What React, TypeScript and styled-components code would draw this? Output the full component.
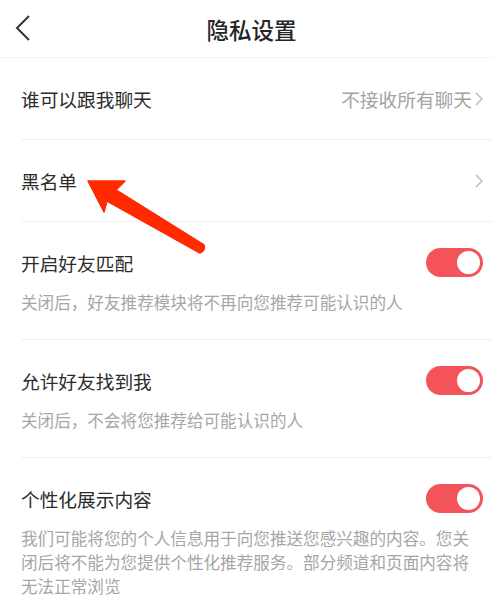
import styled, { createGlobalStyle } from "styled-components"

const GlobalStyle = createGlobalStyle`
  html, body {
    margin: 0;
    padding: 0;
    background: #ffffff;
  }
  body {
    font-family: "Noto Sans CJK SC", "Noto Sans", sans-serif;
    color: #2b2b2b;
  }
`

const Page = styled.div`
  position: relative;
  width: 493px;
  min-height: 605px;
  overflow: hidden;
`

const Header = styled.header`
  box-sizing: border-box;
  height: 58px;
  display: grid;
  grid-template-columns: 1fr auto 1fr;
  align-items: center;
  padding-left: 10px;
  border-bottom: 1px solid #f3f3f3;
`

const Back = styled.button`
  justify-self: start;
  display: flex;
  border: 0;
  background: none;
  padding: 0 0 1px 5px;
`

const Title = styled.h1`
  margin: 0;
  font-size: 22.5px;
  font-weight: 500;
  color: #262626;
  line-height: 30px;
`

const List = styled.ul`
  list-style: none;
  margin: 0;
  padding: 0 0 0 21px;
`

const Item = styled.li<{ $toggle?: boolean; $last?: boolean }>`
  box-sizing: border-box;
  padding: ${p => (p.$toggle ? "25px 10px 25px 0" : "0 10px 0 0")};
  height: ${p => (p.$toggle ? "auto" : "82px")};
  display: flex;
  flex-direction: column;
  justify-content: center;
  border-bottom: ${p => (p.$last ? "0" : "1px solid #f0f0f0")};
`

const Row = styled.div`
  display: flex;
  align-items: center;
  justify-content: space-between;
  height: 30px;
`

const Label = styled.span`
  font-size: 18.7px;
  color: #2b2b2b;
`

const Value = styled.span`
  display: flex;
  align-items: center;
  gap: 3px;
  font-size: 18.7px;
  color: #a3a3a3;
`

const Desc = styled.p`
  margin: 13px 0 0;
  font-size: 16.6px;
  line-height: 24px;
  color: #a6a6a6;
`

const Track = styled.span<{ $on: boolean }>`
  box-sizing: border-box;
  width: 57px;
  height: 29px;
  border-radius: 15px;
  padding: 3px;
  display: flex;
  justify-content: ${p => (p.$on ? "flex-end" : "flex-start")};
  background: ${p => (p.$on ? "#f4535a" : "#e5e5e5")};
`

const Knob = styled.span`
  width: 23px;
  height: 23px;
  border-radius: 50%;
  background: #ffffff;
`

const Pointer = styled.svg`
  position: absolute;
  left: 0;
  top: 0;
  pointer-events: none;
`

const Chevron = () => (
  <svg width="8" height="14" viewBox="0 0 8 14">
    <polyline points="1,1 7,7 1,13" fill="none" stroke="#b3b3b3" strokeWidth="1.3" />
  </svg>
)

const Switch = ({ on }: { on: boolean }) => (
  <Track $on={on}>
    <Knob />
  </Track>
)

const toggles = [
  { label: "开启好友匹配", desc: "关闭后，好友推荐模块将不再向您推荐可能认识的人" },
  { label: "允许好友找到我", desc: "关闭后，不会将您推荐给可能认识的人" },
  {
    label: "个性化展示内容",
    desc: "我们可能将您的个人信息用于向您推送您感兴趣的内容。您关闭后将不能为您提供个性化推荐服务。部分频道和页面内容将无法正常浏览",
  },
]

export default function App() {
  return (
    <Page>
      <GlobalStyle />
      <Header>
        <Back aria-label="返回">
          <svg width="16" height="28" viewBox="0 0 16 28">
            <polyline points="14,2 2,14 14,26" fill="none" stroke="#333333" strokeWidth="2" />
          </svg>
        </Back>
        <Title>隐私设置</Title>
        <span />
      </Header>
      <List>
        <Item>
          <Row>
            <Label>谁可以跟我聊天</Label>
            <Value>
              不接收所有聊天
              <Chevron />
            </Value>
          </Row>
        </Item>
        <Item>
          <Row>
            <Label>黑名单</Label>
            <Value>
              <Chevron />
            </Value>
          </Row>
        </Item>
        {toggles.map((t, i) => (
          <Item key={t.label} $toggle $last={i === toggles.length - 1}>
            <Row>
              <Label>{t.label}</Label>
              <Switch on />
            </Row>
            <Desc>{t.desc}</Desc>
          </Item>
        ))}
      </List>
      <Pointer width="493" height="605" viewBox="0 0 493 605">
        <path
          d="M88 181 L125 181 L116 190 L204 245 Q206 250 200 253 L107 201 L104 212 Z"
          fill="#ff2a00"
          stroke="#ff2a00"
          strokeWidth="1.5"
          strokeLinejoin="round"
        />
      </Pointer>
    </Page>
  )
}
